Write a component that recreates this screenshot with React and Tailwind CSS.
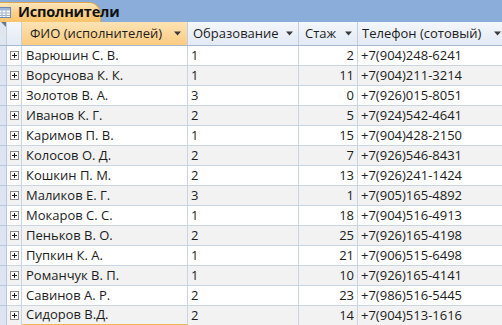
import React from "react"

const rows = [
  ["Варюшин С. В.", "1", "2", "+7(904)248-6241"],
  ["Ворсунова К. К.", "1", "11", "+7(904)211-3214"],
  ["Золотов В. А.", "3", "0", "+7(926)015-8051"],
  ["Иванов К. Г.", "2", "5", "+7(924)542-4641"],
  ["Каримов П. В.", "1", "15", "+7(904)428-2150"],
  ["Колосов О. Д.", "2", "7", "+7(926)546-8431"],
  ["Кошкин П. М.", "2", "13", "+7(926)241-1424"],
  ["Маликов Е. Г.", "3", "1", "+7(905)165-4892"],
  ["Мокаров С. С.", "1", "18", "+7(904)516-4913"],
  ["Пеньков В. О.", "2", "25", "+7(926)165-4198"],
  ["Пупкин К. А.", "1", "21", "+7(906)515-6498"],
  ["Романчук В. П.", "1", "10", "+7(926)165-4141"],
  ["Савинов А. Р.", "2", "23", "+7(986)516-5445"],
  ["Сидоров В.Д.", "2", "14", "+7(904)513-1616"],
]

// little dropdown arrow in the column headers
function Arrow() {
  return (
    <svg width="7" height="5" viewBox="0 0 7 5" className="shrink-0">
      <path d="M0 0.5h7L3.5 4.5z" fill="#3b3b3b" />
    </svg>
  )
}

function PlusBox() {
  return (
    <svg width="9" height="9" viewBox="0 0 9 9">
      <rect x="0.5" y="0.5" width="8" height="8" fill="#fff" stroke="#8a8a8a" />
      <path d="M2 4.5h5M4.5 2v5" stroke="#1a1a1a" />
    </svg>
  )
}

function TableIcon() {
  return (
    <svg width="14" height="11" viewBox="0 0 14 11">
      <rect x="0.5" y="0.5" width="13" height="10" fill="#fff" stroke="#6d89b3" />
      <rect x="1" y="1" width="12" height="2.5" fill="#9fb8dc" />
      <path d="M1 6h12M1 8.5h12M5 1v9M9 1v9" stroke="#9fb2cc" />
    </svg>
  )
}

export default function App() {
  return (
    <div className="w-[502px] h-[325px] overflow-hidden bg-white text-[13px] text-[#1c1c1c]" style={{ fontFamily: '"Open Sans", "Noto Sans", sans-serif' }}>
      {/* tab strip */}
      <div className="h-[22px] bg-[#8badd9] flex items-end">
        <div className="h-[20px] w-[101px] flex items-center gap-[7px] rounded-tr-[12px] bg-gradient-to-b from-[#fde7bd] via-[#fcd08a] to-[#fbc46a] border-t border-r border-[#e0a64e]">
          <div className="-ml-[3px]"><TableIcon /></div>
          <span className="font-bold text-[14.5px] tracking-[-0.2px] text-[#111] leading-none">Исполнители</span>
        </div>
      </div>

      {/* header */}
      <div className="flex h-[24px] border-b border-[#a5b9d3]">
        <div className="w-[7px] shrink-0 bg-[#dfe6f0] border-r border-[#c3cfe0] relative">
          <div className="absolute top-0 right-0 w-0 h-0 border-t-[5px] border-l-[5px] border-t-[#6c7a8c] border-l-transparent" />
        </div>
        <div className="w-[15px] shrink-0 bg-gradient-to-b from-[#f4f7fb] to-[#e3eaf4] border-r border-[#c3cfe0]" />
        <div className="w-[166px] shrink-0 flex items-center pl-[8px] pr-[6px] bg-gradient-to-b from-[#fde3b4] to-[#fbcb80] border-r border-[#c3cfe0]">
          <span className="flex-1">ФИО (исполнителей)</span>
          <Arrow />
        </div>
        <div className="w-[111px] shrink-0 flex items-center pl-[5px] pr-[5px] bg-gradient-to-b from-[#f4f7fb] to-[#e3eaf4] border-r border-[#c3cfe0]">
          <span className="flex-1">Образование</span>
          <Arrow />
        </div>
        <div className="w-[59px] shrink-0 flex items-center pl-[6px] pr-[5px] bg-gradient-to-b from-[#f4f7fb] to-[#e3eaf4] border-r border-[#c3cfe0]">
          <span className="flex-1">Стаж</span>
          <Arrow />
        </div>
        <div className="w-[148px] shrink-0 flex items-center pl-[4px] pr-[5px] bg-gradient-to-b from-[#f4f7fb] to-[#e3eaf4]">
          <span className="flex-1 whitespace-nowrap">Телефон (сотовый)</span>
          <Arrow />
        </div>
      </div>

      {/* data rows */}
      {rows.map((r, i) => {
        const last = i === rows.length - 1
        const bg = i % 2 === 0 ? "bg-white" : "bg-[#f2f2f2]"
        return (
          <div key={i} className={`flex h-[20px] ${bg}`}>
            <div className="w-[7px] shrink-0 bg-[#dce5f1] border-r border-b border-[#b8c7dc]" />
            <div className="w-[15px] shrink-0 flex items-center justify-center border-r border-b border-[#c9d4e4]">
              <PlusBox />
            </div>
            <div className={`w-[166px] shrink-0 flex items-center pl-[4px] border-r border-[#c9d4e4] ${last ? "border-b-2 border-b-[#f5b55a]" : "border-b"}`}>
              {r[0]}
            </div>
            <div className="w-[111px] shrink-0 flex items-center pl-[3px] border-r border-b border-[#c9d4e4]">
              {r[1]}
            </div>
            <div className="w-[59px] shrink-0 flex items-center justify-end pr-[3px] border-r border-b border-[#c9d4e4]">
              {r[2]}
            </div>
            <div className="w-[148px] shrink-0 flex items-center pl-[3px] border-b border-[#c9d4e4]">
              {r[3]}
            </div>
          </div>
        )
      })}
    </div>
  )
}
